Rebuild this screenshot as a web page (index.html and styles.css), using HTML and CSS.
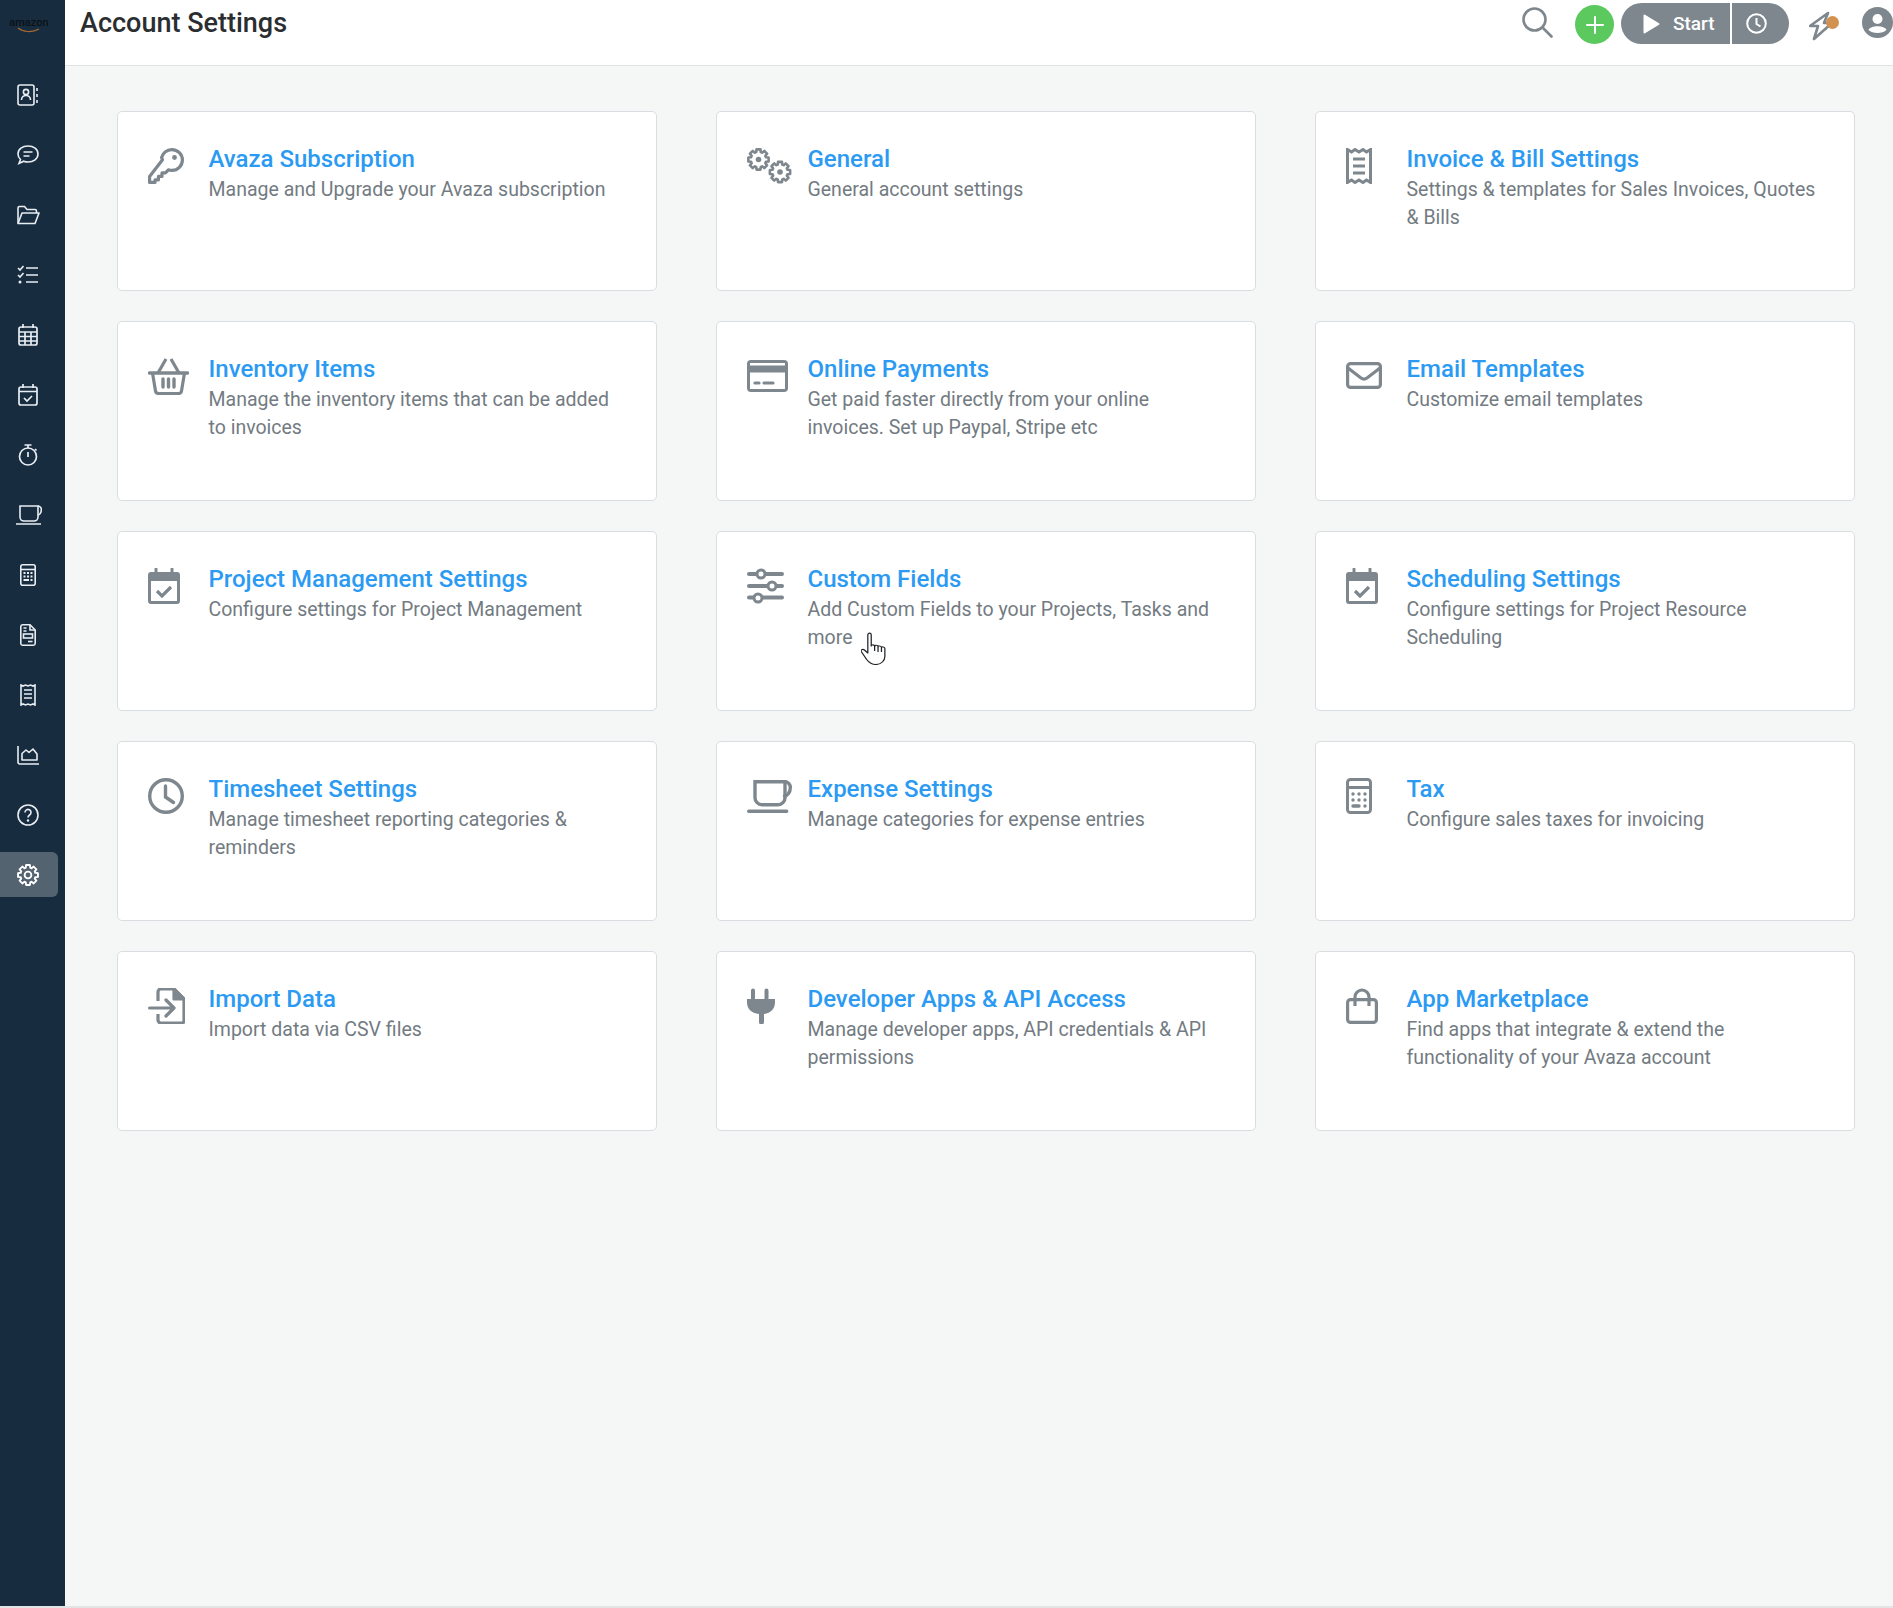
FILE: index.html
```html
<!DOCTYPE html>
<html lang="en">
<head>
  <meta charset="UTF-8" />
  <title>Account Settings</title>
  <link rel="stylesheet" href="styles.css">
</head>
<body>
  <svg class="defs" width="0" height="0">
    <symbol id="cal-check" viewBox="0 0 32 36">
      <path d="M8 1v5M24 1v5" fill="none" stroke="currentColor" stroke-width="3" stroke-linecap="round"/>
      <path d="M3 4h26a3 3 0 0 1 3 3v26a3 3 0 0 1-3 3H3a3 3 0 0 1-3-3V7a3 3 0 0 1 3-3zm0 9v20h26V13z" fill="currentColor" fill-rule="evenodd"/>
      <path d="M9 23l5 5 9-9" fill="none" stroke="currentColor" stroke-width="3.2"/>
    </symbol>
    <polygon id="gear" stroke-linejoin="round" points="-2.63,-8.61 -2.29,-11.78 2.29,-11.78 2.63,-8.61 4.23,-7.95 6.71,-9.95 9.95,-6.71 7.95,-4.23 8.61,-2.63 11.78,-2.29 11.78,2.29 8.61,2.63 7.95,4.23 9.95,6.71 6.71,9.95 4.23,7.95 2.63,8.61 2.29,11.78 -2.29,11.78 -2.63,8.61 -4.23,7.95 -6.71,9.95 -9.95,6.71 -7.95,4.23 -8.61,2.63 -11.78,2.29 -11.78,-2.29 -8.61,-2.63 -7.95,-4.23 -9.95,-6.71 -6.71,-9.95 -4.23,-7.95"/>
  </svg>

  <div class="app">
    <!-- Left navigation -->
    <aside class="sidebar">
      <div class="logo">
        <span class="logo-text">amazon</span>
        <svg class="logo-smile" width="24" height="6" viewBox="0 0 24 6"><path d="M1 1c5 4 14 5 21 1" fill="none" stroke="#a5682f" stroke-width="1.2"/></svg>
      </div>
      <nav class="side-nav">
        <a class="side-link"><svg width="22" height="22" viewBox="0 0 22 22" fill="none" stroke="currentColor" stroke-width="1.6"><rect x="1" y="1" width="16" height="20" rx="2"/><circle cx="9" cy="8" r="2.6"/><path d="M4.5 16c0-6 9-6 9 0M20 4v3M20 10v3M20 16v3"/></svg></a>
        <a class="side-link"><svg width="22" height="22" viewBox="0 0 22 22" fill="none" stroke="currentColor" stroke-width="1.6"><path d="M11 2c5.500 0 10 3.300 10 8s-4.500 8-10 8c-1.500 0-3-.3-4.300-.8L2 19.500l1.500-4C2 14 1 12.200 1 10c0-4.700 4.500-8 10-8z"/><path d="M6.500 8h9M6.500 12h6"/></svg></a>
        <a class="side-link"><svg width="24" height="20" viewBox="0 0 24 20" fill="none" stroke="currentColor" stroke-width="1.6"><path d="M2 18V3a1.500 1.500 0 0 1 1.500-1.500h5L11 4.500h8a1.500 1.500 0 0 1 1.500 1.500v2"/><path d="M2 18.500h17l4-10.500H6z" stroke-linejoin="round"/></svg></a>
        <a class="side-link"><svg width="22" height="20" viewBox="0 0 22 20" fill="none" stroke="currentColor" stroke-width="1.6"><path d="M1 3l2 2 3.500-4M1 10l2 2 3.500-4M9 3h12M9 10h12M9 17h12"/><circle cx="3" cy="17" r="1.500" fill="currentColor" stroke="none"/></svg></a>
        <a class="side-link"><svg width="20" height="22" viewBox="0 0 20 22" fill="none" stroke="currentColor" stroke-width="1.7"><rect x="1" y="3" width="18" height="18" rx="2"/><path d="M5 0v4M15 0v4M1 8h18M1 12.500h18M1 17h18M7 8v13M13 8v13"/></svg></a>
        <a class="side-link"><svg width="20" height="22" viewBox="0 0 20 22" fill="none" stroke="currentColor" stroke-width="1.7"><rect x="1" y="3" width="18" height="18" rx="2"/><path d="M5 0v4M15 0v4M1 7.500h18M6 14l3 3 5-5"/></svg></a>
        <a class="side-link"><svg width="20" height="22" viewBox="0 0 20 22" fill="none" stroke="currentColor" stroke-width="1.7"><circle cx="10" cy="12.500" r="8.500"/><path d="M6.500 1h7M10 1v3M10 8v5M17 5l1.500 1.500"/></svg></a>
        <a class="side-link"><svg width="27" height="20" viewBox="0 0 27 20" fill="none" stroke="currentColor" stroke-width="1.6"><path d="M5 1h18v11a4 4 0 0 1-4 4H9a4 4 0 0 1-4-4z"/><path d="M23 1a3.500 3.500 0 0 1 3.300 4c0 3-2 5-3.300 5M1 19h25"/></svg></a>
        <a class="side-link"><svg width="16" height="22" viewBox="0 0 16 22" fill="none" stroke="currentColor" stroke-width="1.6"><rect x=".8" y=".8" width="14.400" height="20.400" rx="2"/><path d="M1 5.500h14"/><path d="M3.500 9h2M7 9h2M10.500 9h2M3.500 12.500h2M7 12.500h2M10.500 12.500h2M3.500 16h5.500M10.500 16h2" stroke-width="2"/></svg></a>
        <a class="side-link"><svg width="16" height="22" viewBox="0 0 16 22" fill="none" stroke="currentColor" stroke-width="1.6"><path d="M2.500.8H10l5.200 5.200v13.500a1.800 1.800 0 0 1-1.800 1.700H2.500A1.800 1.800 0 0 1 .8 19.500v-17A1.800 1.800 0 0 1 2.500.8z"/><path d="M10 1v5h5M3.500 4h3M3.500 7h3"/><rect x="3.500" y="10" width="9" height="4"/><path d="M8 17.500h4.500"/></svg></a>
        <a class="side-link"><svg width="16" height="22" viewBox="0 0 16 22" fill="none" stroke="currentColor" stroke-width="1.6"><path d="M1 1l2 1 2.500-1L8 2l2.500-1L13 2l2-1v20l-2-1-2.500 1L8 20l-2.500 1L3 20l-2 1z"/><path d="M4 6h8M4 10h8M4 14h8"/></svg></a>
        <a class="side-link"><svg width="22" height="20" viewBox="0 0 22 20" fill="none" stroke="currentColor" stroke-width="1.6"><path d="M1 1v16a2 2 0 0 0 2 2h19"/><path d="M5 15V8.500L9 5l3 2.500L16 4l4 5v6z" stroke-linejoin="round"/></svg></a>
        <a class="side-link"><svg width="22" height="22" viewBox="0 0 22 22" fill="none" stroke="currentColor" stroke-width="1.6"><circle cx="11" cy="11" r="10"/><path d="M8 8.500a3 3 0 1 1 4.600 2.500c-1 .7-1.600 1.200-1.600 2.500"/><circle cx="11" cy="16.500" r="1.200" fill="currentColor" stroke="none"/></svg></a>
        <a class="side-link side-link-active"><svg width="22" height="22" viewBox="-13 -13 26 26" fill="none" stroke="currentColor" stroke-width="2.2"><use href="#gear"/><circle r="4"/></svg></a>
      </nav>
    </aside>

    <div class="main">
      <!-- Top bar -->
      <header class="topbar">
        <h1 class="page-title">Account Settings</h1>
        <div class="top-actions">
          <svg class="top-search" width="31" height="31" viewBox="0 0 31 31" fill="none" stroke="#7e878e" stroke-width="2.600"><circle cx="12.500" cy="12.500" r="11"/><path d="M20.500 20.500l9 9" stroke-linecap="round"/></svg>
          <button class="add-btn"><svg width="18" height="18" viewBox="0 0 18 18"><path d="M9 1v16M1 9h16" stroke="#fff" stroke-width="2" stroke-linecap="round"/></svg></button>
          <div class="timer">
            <button class="timer-start"><svg width="17" height="20" viewBox="0 0 17 20"><path d="M1.500 1.500L15.500 10 1.500 18.500z" fill="#fff" stroke="#fff" stroke-width="2" stroke-linejoin="round"/></svg><span>Start</span></button>
            <button class="timer-log"><svg width="21" height="21" viewBox="0 0 21 21" fill="none" stroke="#fff" stroke-width="2"><circle cx="10.500" cy="10.500" r="9.300"/><path d="M10.500 5v6l4 2.500"/></svg></button>
          </div>
          <div class="bolt">
            <svg width="26" height="30" viewBox="0 0 26 30" fill="none" stroke="#7e878e" stroke-width="2.600" stroke-linejoin="round"><path d="M19 2L1 15h8L5 28l18-16h-8l4-10z"/></svg>
            <span class="bolt-dot"></span>
          </div>
          <svg class="avatar" width="31" height="31" viewBox="0 0 31 31"><circle cx="15.500" cy="15.500" r="15.500" fill="#7e878e"/><circle cx="15.500" cy="12" r="5" fill="#fff"/><path d="M6.500 23c2-5 16-5 18 0-4 4-14 4-18 0z" fill="#fff"/></svg>
        </div>
      </header>

      <!-- Settings cards -->
      <section class="cards">
        <a class="card">
          <div class="card-icon"><svg width="36" height="36" viewBox="0 0 36 36" fill="none" stroke="currentColor" stroke-width="3.2" stroke-linejoin="round"><path d="M24 1.600a10.400 10.400 0 0 1 0 20.800c-1.300 0-2.500-.2-3.600-.6l-2.900 3H14v3.600h-3.600v3.500H7v2.500H1.600v-6L14.500 11.700c-.2-.9-.9-1.700-.9-2.200A10.500 10.500 0 0 1 24 1.600z"/><circle cx="26.500" cy="9.500" r="2.400" fill="currentColor" stroke="none"/></svg></div>
          <div class="card-body"><h2>Avaza Subscription</h2><p>Manage and Upgrade your Avaza subscription</p></div>
        </a>
        <a class="card">
          <div class="card-icon"><svg width="45" height="36" viewBox="0 0 45 36" fill="none" stroke="currentColor" stroke-width="3"><use href="#gear" transform="translate(11.500 11.500) scale(.86)"/><use href="#gear" transform="translate(33 24) scale(.86)"/><circle cx="11.500" cy="11.500" r="2.800" fill="currentColor" stroke="none"/><circle cx="33" cy="24" r="2.800" fill="currentColor" stroke="none"/></svg></div>
          <div class="card-body"><h2>General</h2><p>General account settings</p></div>
        </a>
        <a class="card">
          <div class="card-icon"><svg width="26" height="36" viewBox="0 0 26 36" fill="none" stroke="currentColor" stroke-width="3"><path d="M1.500 1.500l4 2.500 3.500-2.500 4 2.500 4-2.500 3.500 2.500 4-2.500v33l-4-2.500-3.500 2.500-4-2.500-4 2.500-3.500-2.500-4 2.500z"/><path d="M7 11h12M7 18h12M7 25h12" stroke-width="3.200"/></svg></div>
          <div class="card-body"><h2>Invoice &amp; Bill Settings</h2><p>Settings &amp; templates for Sales Invoices, Quotes &amp; Bills</p></div>
        </a>

        <a class="card">
          <div class="card-icon"><svg width="41" height="37" viewBox="0 0 41 37" fill="none" stroke="currentColor" stroke-width="3.200" stroke-linejoin="round"><path d="M1.500 15h38" stroke-width="3.400" stroke-linecap="round"/><path d="M4.500 15l3 18a3 3 0 0 0 3 2.500h20a3 3 0 0 0 3-2.500l3-18M10 15L18 1M31 15L23 1"/><path d="M15 21v8M20.500 21v8M26 21v8" stroke-width="3.400" stroke-linecap="round"/></svg></div>
          <div class="card-body"><h2>Inventory Items</h2><p>Manage the inventory items that can be added to invoices</p></div>
        </a>
        <a class="card card-pay">
          <div class="card-icon"><svg width="41" height="32" viewBox="0 0 41 32"><path d="M4 0h33a4 4 0 0 1 4 4v24a4 4 0 0 1-4 4H4a4 4 0 0 1-4-4V4a4 4 0 0 1 4-4zm-1 3v2.500h35V3zm0 9.500V29h35V12.500z" fill="currentColor" fill-rule="evenodd"/><path d="M8 23h4M17 23h9" stroke="currentColor" stroke-width="3.200" stroke-linecap="round"/></svg></div>
          <div class="card-body"><h2>Online Payments</h2><p>Get paid faster directly from your online invoices. Set up Paypal, Stripe etc</p></div>
        </a>
        <a class="card card-mail">
          <div class="card-icon"><svg width="36" height="27" viewBox="0 0 36 27" fill="none" stroke="currentColor" stroke-width="3.200"><rect x="1.600" y="1.600" width="32.800" height="23.800" rx="3"/><path d="M2 6l13 10c2 1.500 4 1.500 6 0L34 6"/></svg></div>
          <div class="card-body"><h2>Email Templates</h2><p>Customize email templates</p></div>
        </a>

        <a class="card">
          <div class="card-icon"><svg width="32" height="36"><use href="#cal-check"/></svg></div>
          <div class="card-body"><h2>Project Management Settings</h2><p>Configure settings for Project Management</p></div>
        </a>
        <a class="card">
          <div class="card-icon"><svg width="37" height="36" viewBox="0 0 37 36" fill="none" stroke="currentColor"><path d="M2 6h33M2 18h33M2 29.500h33" stroke-width="4" stroke-linecap="round"/><g fill="#fff" stroke-width="3"><circle cx="14" cy="6" r="4"/><circle cx="25" cy="18" r="4"/><circle cx="11" cy="30" r="4"/></g></svg></div>
          <div class="card-body"><h2>Custom Fields</h2><p>Add Custom Fields to your Projects, Tasks and more</p></div>
          <svg class="hand" width="25" height="33" viewBox="1 0 22 33" preserveAspectRatio="none" fill="#fff" stroke="#1f2429" stroke-width="1.100" stroke-linejoin="round"><path d="M7 3c0-2.500 3-2.500 3 0v11c0-1.500 3-1.500 3 .3 0-1.500 3-1.500 3 .5 0-1.300 3-1.200 3 .7 0-1 3-.8 3 1v8c0 4-3 8-8 8-4 0-6-2-8-5L1.500 20c-1.500-2 1-3.500 2.500-2l3 3z"/><path d="M13 14v5M16 15v5M19 16v4" fill="none"/></svg>
        </a>
        <a class="card">
          <div class="card-icon"><svg width="32" height="36"><use href="#cal-check"/></svg></div>
          <div class="card-body"><h2>Scheduling Settings</h2><p>Configure settings for Project Resource Scheduling</p></div>
        </a>

        <a class="card">
          <div class="card-icon"><svg width="36" height="36" viewBox="0 0 36 36" fill="none" stroke="currentColor" stroke-width="3.400"><circle cx="18" cy="18" r="16.300"/><path d="M17.500 8v11l8 5.500" stroke-linecap="round"/></svg></div>
          <div class="card-body"><h2>Timesheet Settings</h2><p>Manage timesheet reporting categories &amp; reminders</p></div>
        </a>
        <a class="card card-pay">
          <div class="card-icon"><svg width="45" height="33" viewBox="0 0 45 33" fill="none" stroke="currentColor" stroke-width="3.400"><path d="M8 1.700h30v16a7 7 0 0 1-7 7H15a7 7 0 0 1-7-7z"/><path d="M38 1.700a5.500 5.500 0 0 1 5.300 6c0 5-3.300 8.300-5.800 8.300M1.700 31.300h38" stroke-linecap="round"/></svg></div>
          <div class="card-body"><h2>Expense Settings</h2><p>Manage categories for expense entries</p></div>
        </a>
        <a class="card">
          <div class="card-icon"><svg width="26" height="36" viewBox="0 0 26 36" fill="none" stroke="currentColor"><rect x="1.500" y="1.500" width="23" height="33" rx="3" stroke-width="3"/><path d="M2 9.500h22" stroke-width="3"/><g fill="currentColor" stroke="none"><circle cx="7" cy="16" r="1.700"/><circle cx="13" cy="16" r="1.700"/><circle cx="19" cy="16" r="1.700"/><circle cx="7" cy="22" r="1.700"/><circle cx="13" cy="22" r="1.700"/><circle cx="19" cy="22" r="1.700"/><rect x="5.300" y="26.300" width="9.400" height="3.400" rx="1.700"/><circle cx="19" cy="28" r="1.700"/></g></svg></div>
          <div class="card-body"><h2>Tax</h2><p>Configure sales taxes for invoicing</p></div>
        </a>

        <a class="card">
          <div class="card-icon"><svg width="37" height="36" viewBox="0 0 37 36" fill="none" stroke="currentColor" stroke-width="3.200" stroke-linejoin="round"><path d="M10 13V4a3 3 0 0 1 3-3h13l10 10v22a2.500 2.500 0 0 1-2.500 2H13a3 3 0 0 1-3-3v-6"/><path d="M26 1v10h10z" fill="currentColor"/><path d="M1.600 20h24M18 12l8 8-8 8" stroke-linecap="round"/></svg></div>
          <div class="card-body"><h2>Import Data</h2><p>Import data via CSV files</p></div>
        </a>
        <a class="card">
          <div class="card-icon"><svg width="28" height="36" viewBox="0 0 28 36"><path d="M6 2.500v8M19.500 2.500v8" stroke="currentColor" stroke-width="4" stroke-linecap="round"/><path d="M0 11h28v3c0 7-4 11-11 12v8a2.500 2.500 0 0 1-5 0v-8C4 25 0 21 0 14z" fill="currentColor"/></svg></div>
          <div class="card-body"><h2>Developer Apps &amp; API Access</h2><p>Manage developer apps, API credentials &amp; API permissions</p></div>
        </a>
        <a class="card">
          <div class="card-icon"><svg width="32" height="36" viewBox="0 0 32 36" fill="none" stroke="currentColor" stroke-width="3.200"><rect x="1.600" y="11.600" width="28.800" height="22.800" rx="3"/><path d="M9 18V9a7 7 0 0 1 14 0v9"/></svg></div>
          <div class="card-body"><h2>App Marketplace</h2><p>Find apps that integrate &amp; extend the functionality of your Avaza account</p></div>
        </a>
      </section>
    </div>
  </div>
</body>
</html>
```

FILE: styles.css
```css
/* Basic page styling */
html, body {
  height: 100%;
}
body {
  margin: 0;
  font-family: Roboto, "Liberation Sans", sans-serif;
  background: #f5f7f7;
  overflow: hidden;
}
.defs {
  display: block;
  height: 0;
}
.app {
  display: flex;
  height: 1606px;
  border-bottom: 2px solid #e2e5e6;
}

/* Sidebar */
.sidebar {
  width: 65px;
  flex-shrink: 0;
  background: #182c40;
}
.logo {
  height: 65px;
  display: flex;
  flex-direction: column;
  align-items: center;
  padding: 17px 7px 0 0;
  box-sizing: border-box;
}
.logo-text {
  color: #0b1116;
  font-size: 11px;
  line-height: 12px;
  font-weight: 500;
}
.logo-smile {
  margin-top: -2px;
}
.side-nav {
  display: flex;
  flex-direction: column;
  padding-top: 7px;
}
.side-link {
  width: 58px;
  height: 45px;
  margin-bottom: 15px;
  display: flex;
  align-items: center;
  justify-content: center;
  color: #e8edf2;
  padding-right: 2px;
  box-sizing: border-box;
}
.side-link-active {
  background: #546370;
  border-radius: 0 6px 6px 0;
  color: #fff;
}

/* Top bar */
.main {
  flex: 1;
  min-width: 0;
}
.topbar {
  height: 66px;
  box-sizing: border-box;
  background: #fff;
  border-bottom: 1px solid #e0e3e4;
  display: flex;
  justify-content: space-between;
  padding-left: 15px;
}
.page-title {
  margin: 8px 0 0;
  font-size: 27px;
  line-height: 30px;
  font-weight: 500;
  color: #2b2e31;
}
.top-actions {
  display: flex;
  align-items: flex-start;
  padding-top: 3px;
}
.top-search {
  margin: 4px 22px 0 0;
}
.add-btn {
  width: 39px;
  height: 39px;
  border: 0;
  border-radius: 50%;
  background: #5cc95f;
  margin: 2px 7px 0 0;
  padding: 0;
  display: flex;
  align-items: center;
  justify-content: center;
}
.timer {
  display: flex;
  height: 41px;
  gap: 2px;
  margin-right: 20px;
}
.timer button {
  border: 0;
  background: #7e878e;
  color: #fff;
  display: flex;
  align-items: center;
  padding: 0;
}
.timer-start {
  width: 109px;
  border-radius: 21px 0 0 21px;
  font: 500 19px Roboto, sans-serif;
  padding-left: 22px !important;
  gap: 13px;
}
.timer-log {
  width: 57px;
  border-radius: 0 21px 21px 0;
  padding-left: 14px !important;
}
.bolt {
  position: relative;
  width: 30px;
  height: 30px;
  margin: 8px 23px 0 0;
}
.bolt-dot {
  position: absolute;
  top: 5px;
  right: 0;
  width: 13px;
  height: 13px;
  border-radius: 50%;
  background: #d2924f;
}
.avatar {
  margin-top: 4px;
}

/* Settings cards */
.cards {
  display: grid;
  grid-template-columns: repeat(3, 540px);
  grid-auto-rows: 180px;
  column-gap: 59px;
  row-gap: 30px;
  padding: 45px 0 0 52px;
}
.card {
  position: relative;
  display: flex;
  box-sizing: border-box;
  background: #fff;
  border: 1px solid #d9dde1;
  border-radius: 5px;
  padding: 36px 30px 0 30px;
}
.card-icon {
  width: 60.5px;
  flex-shrink: 0;
  color: #7e878e;
}
.card-icon svg {
  display: block;
}
.card-pay .card-icon {
  padding-top: 2px;
}
.card-mail .card-icon {
  padding-top: 4px;
}
.card-body {
  margin-top: -4px;
}
.card-body h2 {
  margin: 0;
  font-size: 24px;
  line-height: 30px;
  font-weight: 500;
  color: #2b9af3;
}
.card-body p {
  margin: 2px 0 0;
  font-size: 19.5px;
  line-height: 28px;
  color: #737b82;
}
.hand {
  position: absolute;
  left: 144px;
  top: 100px;
}
```
